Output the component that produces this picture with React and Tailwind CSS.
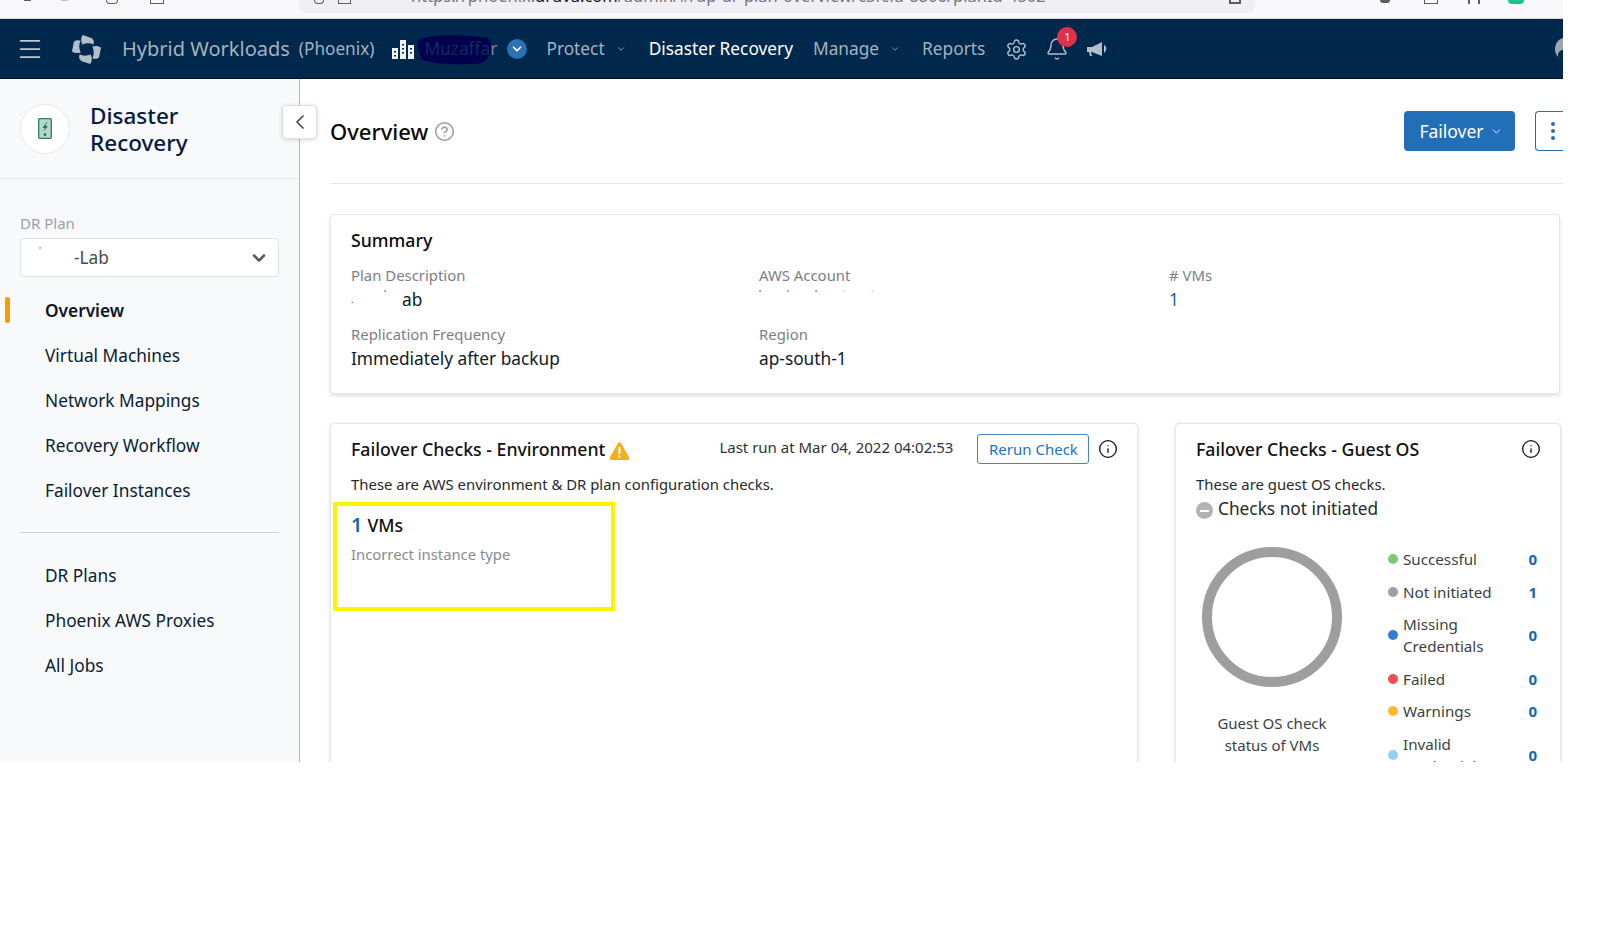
import React from "react";
import { ChevronDown, ChevronLeft, Info, HelpCircle, Settings, Bell, Menu } from "lucide-react";

const navItems = ["Virtual Machines", "Network Mappings", "Recovery Workflow", "Failover Instances"];
const lowerItems = ["DR Plans", "Phoenix AWS Proxies", "All Jobs"];

function Logo() {
  return (
    <svg width="31" height="31" viewBox="0 0 32 32" fill="#b4bec8">
      <path d="M12 1 L21 4 C24 6 24 8 23 11 C20 9 15 9 12 11 C10 8 10 4 12 1Z" />
      <path d="M31 14 L29 24 C27 26 25 26 22 25 C24 22 24 17 22 13 C25 12 28 12 31 14Z" />
      <path d="M20 31 L11 28 C8 26 8 24 9 21 C12 23 17 23 20 21 C22 24 22 28 20 31Z" />
      <path d="M1 18 L3 8 C5 6 7 6 10 7 C8 10 8 15 10 19 C7 20 4 20 1 18Z" />
    </svg>
  );
}

function Building() {
  return (
    <svg width="22" height="19" viewBox="0 0 22 19" fill="#f1f3f5">
      <rect x="0" y="8" width="6" height="11" />
      <rect x="8" y="0" width="6" height="19" />
      <rect x="16" y="5" width="6" height="14" />
      <g fill="#00284d">
        <rect x="2" y="11" width="2" height="1.5" />
        <rect x="2" y="15" width="2" height="1.5" />
        <rect x="10" y="4" width="2" height="1.5" />
        <rect x="10" y="8" width="2" height="1.5" />
        <rect x="10" y="12" width="2" height="1.5" />
        <rect x="18" y="8" width="2" height="1.5" />
        <rect x="18" y="12" width="2" height="1.5" />
      </g>
    </svg>
  );
}

function Megaphone() {
  return (
    <svg width="21" height="17" viewBox="0 0 21 17" fill="#b4bec8">
      <path d="M0 6 H5 L15 1 V15 L5 11 H4 L5 15 H3 L2 11 H0Z" />
      <path d="M17 4 C20 5 20 10 17 12Z" />
    </svg>
  );
}

function Legend({ color, label, value, tall }) {
  return (
    <div className={`flex items-center mt-[10.6px] first:mt-0 ${tall ? "h-[44px]" : "h-[22px]"}`}>
      <span className={`w-[10px] h-[10px] rounded-full shrink-0 ${color}`} />
      <span className="ml-[5px] w-[126px] text-[15.2px] leading-[22px] text-[#3a3f45]">{label}</span>
      <span className="ml-auto text-[15px] font-bold text-[#1667b2] leading-[22px]">{value}</span>
    </div>
  );
}

export default function App() {
  return (
    <div className="w-[1563px] h-[762px] overflow-hidden bg-white font-['Noto_Sans',sans-serif]">
      {/* browser chrome cut off by the crop */}
      <div className="h-[19px] bg-[#f9f9fb] border-b border-[#d8d8dc] overflow-hidden flex text-[#5b5b66]">
        <div className="w-[299px] h-[18px] relative overflow-hidden">
          <div className="flex items-start h-[4px] pl-[24px] gap-[30px]">
            <span className="block w-[7px] h-[1px] bg-[#5b5b66]" />
            <span className="block w-[7px] h-[1px] bg-[#c4c4c8]" />
            <span className="block w-[12px] h-[4px] ml-[8px] border-x border-b border-[#5b5b66] rounded-b-full" />
            <span className="block w-[14px] h-[4px] ml-[2px] border-x border-b border-[#5b5b66]" />
          </div>
        </div>
        <div className="w-[956px] h-[13px] bg-[#f0f0f4] rounded-br-[8px] rounded-bl-[8px] flex overflow-hidden pl-[15px]">
          <span className="block w-[10px] h-[4px] border-x border-b border-[#5b5b66] rounded-b-full" />
          <span className="block w-[13px] h-[4px] ml-[14px] border-x border-b border-[#5b5b66]" />
          <span className="ml-[60px] -mt-[14px] text-[16.5px] leading-[20px] text-[#75757c] whitespace-nowrap">
            https://phoenix.<span className="text-[#15141a]">druva.com</span>/admin/#/dp-dr-plan-overview/c3fcfa-8806/planId-4502
          </span>
          <span className="ml-auto mr-[14px] block w-[12px] h-[4px] border-x-2 border-b-2 border-[#5b5b66]" />
        </div>
        <div className="flex-1 flex pl-[125px] gap-[34px] h-[4px]">
          <span className="block w-[10px] h-[3px] bg-[#5b5b66] rounded-b-full" />
          <span className="block w-[14px] h-[4px] border-x border-b border-[#5b5b66]" />
          <span className="block w-[12px] h-[4px] -ml-[4px] border-x-2 border-[#5b5b66]" />
          <span className="block w-[16px] h-[4px] -ml-[6px] bg-[#19c38a] rounded-b-full" />
        </div>
      </div>

      {/* nav */}
      <div className="h-[60px] pt-[1px] bg-[#00284d] border-b border-[#000f26] flex items-center text-[#a6b2be] whitespace-nowrap overflow-hidden">
        <Menu className="ml-[16px] text-[#c0c8d0]" size={28} strokeWidth={1.5} />
        <span className="ml-[27px]"><Logo /></span>
        <span className="ml-[20px] text-[20px]">Hybrid Workloads</span>
        <span className="ml-[9px] text-[17.2px]">(Phoenix)</span>
        <span className="ml-[18px]"><Building /></span>
        <span className="ml-[10px] relative text-[17.3px] w-[74px]">
          <svg className="absolute -left-[8px] -top-[2px]" width="78" height="32" viewBox="0 0 78 32" fill="#00004d">
            <path d="M2 6 C16 0 44 0 72 4 C78 10 76 24 66 29 C44 32 20 30 6 26 C3 20 1 12 2 6Z" />
          </svg>
          <span className="relative text-[#0f2a5c]">Muzaffa</span><span className="relative text-[#6f8195]">r</span>
        </span>
        <span className="ml-[9px] w-[20px] h-[20px] rounded-full bg-[#2a72b5] flex items-center justify-center">
          <ChevronDown size={14} strokeWidth={3} className="text-white" />
        </span>
        <span className="ml-[19px] text-[17.3px]">Protect</span>
        <ChevronDown size={10} strokeWidth={2} className="ml-[11px]" />
        <span className="ml-[23px] text-[17.3px] text-white">Disaster Recovery</span>
        <span className="ml-[20px] text-[17.3px]">Manage</span>
        <ChevronDown size={10} strokeWidth={2} className="ml-[11px]" />
        <span className="ml-[22px] text-[17.3px]">Reports</span>
        <Settings size={23} strokeWidth={1.5} className="ml-[20px] text-[#b4bec8]" />
        <span className="ml-[17px] relative">
          <Bell size={24} strokeWidth={1.4} className="text-[#b4bec8]" />
          <span className="absolute -top-[10px] left-[12px] w-[20px] h-[20px] rounded-full bg-[#e0314b] text-white text-[11px] flex items-center justify-center">1</span>
        </span>
        <span className="ml-[18px]"><Megaphone /></span>
        <span className="ml-auto -mr-[16px] w-[24px] h-[24px] bg-[#9ba6b1] rounded-full relative overflow-hidden">
          <span className="absolute left-[3px] top-[13px] w-[10px] h-[14px] bg-[#00284d] rounded-full" />
        </span>
      </div>

      <div className="flex h-[683px]">
        {/* sidebar */}
        <aside className="w-[300px] shrink-0 bg-[#f7f9fb] border-r border-[#b0b5ba] text-[#0b1c33] relative">
          <div className="h-[100px] border-b border-[#e3e5e8] flex items-center pl-[20px]">
            <span className="w-[50px] h-[50px] rounded-full bg-white border border-[#e8e8ea] flex items-center justify-center">
              <svg width="14" height="21" viewBox="0 0 14 21">
                <rect x="0.7" y="0.7" width="12.6" height="19.6" rx="1" fill="#b3d9c7" stroke="#2f7d62" strokeWidth="1.3" />
                <path d="M9.500 3 L4.500 10 H7 L5 14 L10 8 H7.500Z" fill="#2f6d58" />
                <circle cx="7" cy="16.700" r="1.400" fill="#2f6d58" />
              </svg>
            </span>
            <span className="ml-[20px] text-[22.5px] leading-[27px] font-medium text-[#06193f]">Disaster<br />Recovery</span>
          </div>
          <button className="absolute left-[282px] top-[26px] w-[35px] h-[34px] bg-white border border-[#dcdee2] rounded-[4px] shadow-[0_1px_4px_rgba(0,0,0,0.15)] flex items-center justify-center z-10 text-[#444a50]">
            <ChevronLeft size={24} strokeWidth={1.7} />
          </button>
          <div className="px-[20px] pt-[34px]">
            <div className="text-[15px] leading-[20px] text-[#9aa1a9]">DR Plan</div>
            <div className="mt-[5px] h-[39px] w-[259px] bg-white border border-[#dfe2e6] rounded-[4px] flex items-center pl-[18px] pr-[9px] text-[17.3px] text-[#444a50]">
              <span className="w-[35px] text-[9px] text-[#8a3030] leading-[14px] self-start mt-[5px]">'</span>
              -Lab
              <ChevronDown size={20} strokeWidth={3} className="ml-auto text-[#555b61]" />
            </div>
          </div>
          <nav className="mt-[11px]">
            <div className="h-[45px] flex items-center relative pl-[45px] text-[17.3px] font-semibold text-[#0a1626]">
              <span className="absolute left-[5px] top-[9px] w-[5px] h-[26px] rounded-[2px] bg-[#ff9900]" />
              Overview
            </div>
            {navItems.map((t) => (
              <div key={t} className="h-[45px] flex items-center pl-[45px] text-[17.3px]">{t}</div>
            ))}
          </nav>
          <div className="mx-[20px] mt-[19px] mb-[20px] border-t border-[#cfd2d6] w-[259px]" />
          <nav>
            {lowerItems.map((t) => (
              <div key={t} className="h-[45px] flex items-center pl-[45px] text-[17.3px]">{t}</div>
            ))}
          </nav>
        </aside>

        {/* main */}
        <main className="flex-1 pl-[30px] min-w-0">
          <div className="h-[105px] border-b border-[#e4e5e7] flex items-center">
            <span className="text-[22px] font-medium text-[#0a0a0a]">Overview</span>
            <HelpCircle size={21} strokeWidth={2} className="ml-[6px] text-[#a0a8a8]" />
            <button className="ml-auto h-[40px] w-[111px] pl-[3px] rounded-[4px] bg-[#2170b7] text-white text-[17.5px] flex items-center justify-center">
              Failover
              <ChevronDown size={13} strokeWidth={1.5} className="ml-[6px]" />
            </button>
            <button className="ml-[20px] -mr-[2px] h-[40px] w-[30px] rounded-l-[4px] border-y border-l border-[#2170b7] flex items-center pl-[15px]">
              <span className="flex flex-col gap-[3px]">
                <span className="w-[4px] h-[4px] rounded-full bg-[#2170b7]" />
                <span className="w-[4px] h-[4px] rounded-full bg-[#2170b7]" />
                <span className="w-[4px] h-[4px] rounded-full bg-[#2170b7]" />
              </span>
            </button>
          </div>

          <section className="mt-[30px] w-[1230px] h-[180px] bg-white border border-[#e4e6e8] rounded-[4px] shadow-[0_2px_4px_rgba(0,0,0,0.12)] pl-[20px] pt-[13px]">
            <h2 className="text-[17.7px] leading-[24px] font-medium text-[#0a0a0a]">Summary</h2>
            <div className="mt-[13px] grid grid-cols-[408px_410px_1fr] text-[#0d1b2a]">
              <div>
                <div className="text-[14.9px] leading-[20px] text-[#7a8087]">Plan Description</div>
                <div className="mt-[2px] h-[26px] flex items-center text-[17.3px] leading-[26px]">
                  <span className="w-[33px] text-[9px]">.</span>
                  <span className="w-[18px] text-[9px] self-start leading-[14px]">'</span>
                  ab
                </div>
              </div>
              <div>
                <div className="text-[14.9px] leading-[20px] text-[#7a8087]">AWS Account</div>
                <div className="mt-[2px] h-[26px] flex items-start gap-[26px] text-[9px] leading-[14px]"><span>'</span><span>'</span><span>'</span><span className="text-[#b8bcc0]">'</span><span className="text-[#b8bcc0]">'</span></div>
              </div>
              <div>
                <div className="text-[14.9px] leading-[20px] text-[#7a8087]"># VMs</div>
                <div className="mt-[2px] h-[26px] text-[17.3px] leading-[26px] text-[#1667b2]">1</div>
              </div>
              <div className="mt-[11px]">
                <div className="text-[14.9px] leading-[20px] text-[#7a8087]">Replication Frequency</div>
                <div className="mt-[2px] text-[17.3px] leading-[26px]">Immediately after backup</div>
              </div>
              <div className="mt-[11px]">
                <div className="text-[14.9px] leading-[20px] text-[#7a8087]">Region</div>
                <div className="mt-[2px] text-[17.3px] leading-[26px]">ap-south-1</div>
              </div>
            </div>
          </section>

          <div className="mt-[29px] flex gap-[37px] items-start">
            <section className="w-[808px] h-[400px] bg-white border border-[#e4e6e8] rounded-[4px] shadow-[0_1px_4px_rgba(0,0,0,0.12)] relative">
              <div className="h-[50px] flex items-center pl-[20px] whitespace-nowrap">
                <span className="text-[17.7px] font-medium text-[#111]">Failover Checks - Environment</span>
                <svg className="ml-[4px] mt-[3px]" width="21" height="18" viewBox="0 0 21 18">
                  <path d="M10.5 0.5 C11.5 0.5 12 1 12.500 2 L20 15 C21 17 20 18 18 18 H3 C1 18 0 17 1 15 L8.500 2 C9 1 9.500 0.5 10.500 0.5Z" fill="#f5ae1d" />
                  <rect x="9.500" y="5" width="2" height="7" fill="#fff" />
                  <rect x="9.500" y="13.500" width="2" height="2" fill="#fff" />
                </svg>
                <span className="ml-[89px] -mt-[3px] text-[15px] text-[#2e3338]">Last run at Mar 04, 2022 04:02:53</span>
                <button className="ml-[24px] w-[112px] h-[30px] rounded-[3px] border border-[#3f86c6] text-[15px] text-[#1f70b8]">Rerun Check</button>
                <Info size={20} strokeWidth={1.6} className="ml-[9px] text-[#111]" />
              </div>
              <p className="pl-[20px] text-[14.9px] leading-[20px] text-[#26292d]">These are AWS environment &amp; DR plan configuration checks.</p>
              <div className="ml-[2px] mt-[8px] w-[282px] h-[109px] border-[4px] border-[#fff200] pl-[14px] pt-[6px]">
                <div className="text-[17.7px] leading-[26px] font-medium text-[#111]">
                  <span className="text-[20px] font-semibold text-[#1667b2]">1</span>
                  <span className="ml-[5px]">VMs</span>
                </div>
                <div className="mt-[6px] text-[14.8px] leading-[20px] text-[#868c94]">Incorrect instance type</div>
              </div>
            </section>

            <section className="w-[386px] h-[400px] bg-white border border-[#e4e6e8] rounded-[4px] shadow-[0_1px_4px_rgba(0,0,0,0.12)] px-[20px]">
              <div className="h-[50px] flex items-center justify-between">
                <span className="text-[17.7px] font-medium text-[#111]">Failover Checks - Guest OS</span>
                <Info size={20} strokeWidth={1.6} className="-mr-[1px] text-[#111]" />
              </div>
              <p className="text-[14.9px] leading-[20px] text-[#26292d]">These are guest OS checks.</p>
              <div className="flex items-center mt-[2px] h-[26px]">
                <span className="mt-[3px] w-[17px] h-[17px] rounded-full bg-[#b3b3b3] flex items-center justify-center">
                  <span className="w-[9px] h-[2px] bg-white" />
                </span>
                <span className="ml-[5px] text-[17.3px] text-[#26292d]">Checks not initiated</span>
              </div>
              <div className="flex mt-[25px]">
                <div className="w-[152px] shrink-0 flex flex-col items-center">
                  <div className="w-[140px] h-[140px] rounded-full border-[10px] border-[#9e9e9e]" />
                  <div className="mt-[25px] text-[15px] leading-[22px] text-[#3a3f45] text-center">Guest OS check<br />status of VMs</div>
                </div>
                <div className="ml-[40px] w-[149px] mt-[1px]">
                  <Legend color="bg-[#7cc97c]" label="Successful" value="0" />
                  <Legend color="bg-[#9e9e9e]" label="Not initiated" value="1" />
                  <Legend color="bg-[#2e7fd0]" label={<>Missing<br />Credentials</>} value="0" tall />
                  <Legend color="bg-[#ef4f4f]" label="Failed" value="0" />
                  <Legend color="bg-[#fdb92a]" label="Warnings" value="0" />
                  <Legend color="bg-[#93d1f5]" label={<>Invalid<br />Credentials</>} value="0" tall />
                </div>
              </div>
            </section>
          </div>
        </main>
      </div>
    </div>
  );
}
